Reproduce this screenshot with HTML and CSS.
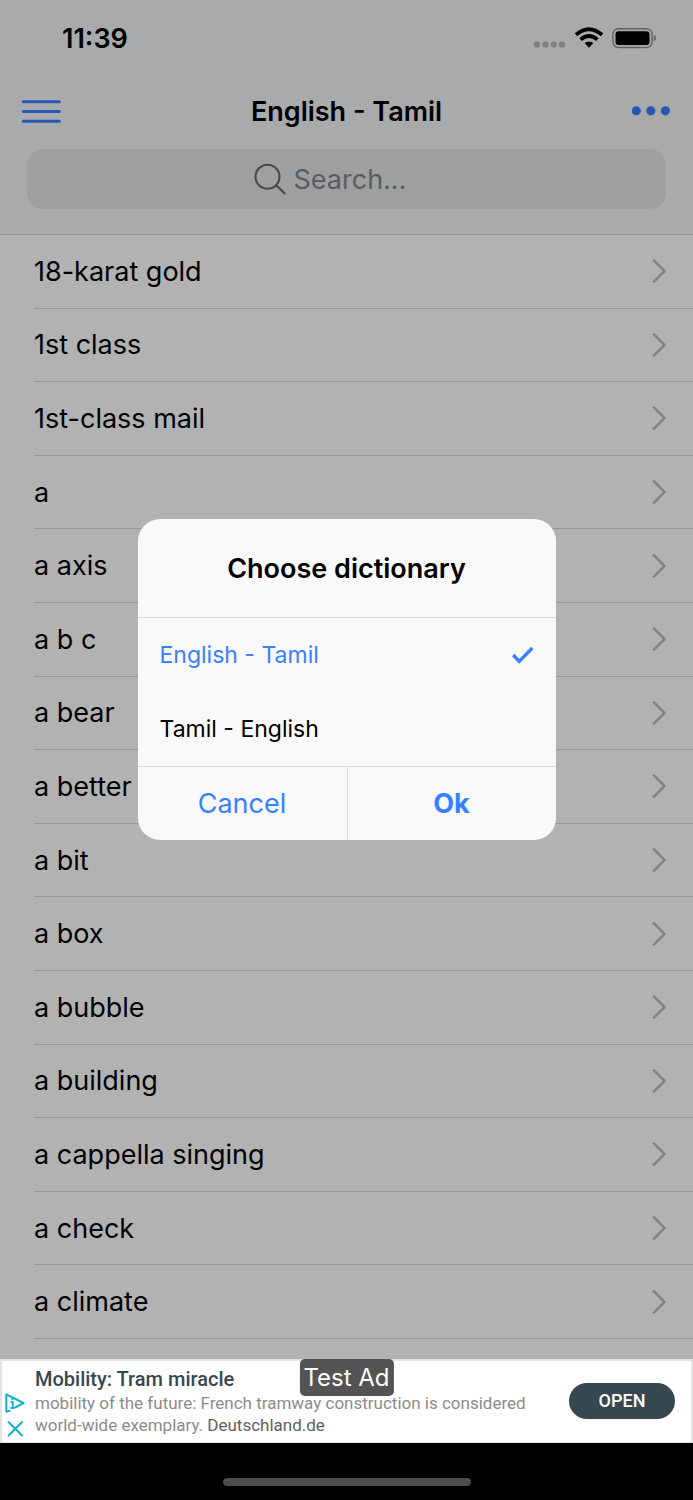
FILE: index.html
```html
<!DOCTYPE html>
<html lang="en">
<head>
<meta charset="utf-8">
<meta name="viewport" content="width=device-width, initial-scale=1">
<title>English - Tamil</title>
<link rel="stylesheet" href="styles.css">
</head>
<body>
<div class="screen">
  <header class="header">
    <div class="status">
      <time class="clock">11:39</time>
      <svg class="status-icons" viewBox="0 0 124 24" aria-hidden="true">
        <g fill="#b8b8ba">
          <rect x="1" y="15.500" width="6" height="6" rx="2"/><rect x="9.500" y="15.500" width="6" height="6" rx="2"/><rect x="17.800" y="15.500" width="6" height="6" rx="2"/><rect x="26" y="15.500" width="6" height="6" rx="2"/>
        </g>
        <g fill="none" stroke="#000" stroke-width="3.800">
          <path d="M43 8.700Q56 -2.300 69 8.700"/>
          <path d="M47.600 13.600Q56 6.500 64.400 13.600"/>
        </g>
        <path d="M51.600 17.100Q56 13.700 60.400 17.100L56 21.700Z"/>
        <rect x="80" y="2.700" width="39" height="18.800" rx="5.500" fill="none" stroke="#8c8c90" stroke-width="1.400"/>
        <rect x="82.500" y="5.200" width="34" height="13.800" rx="3"/>
        <path d="M120.700 8.700Q123.200 9.700 123.200 12T120.700 15.200Z" fill="#99999c"/>
      </svg>
    </div>
    <div class="navbar">
      <button class="icon-button" type="button" aria-label="Menu">
        <svg viewBox="0 0 40 24" width="40" height="24" stroke="#3880ff" stroke-width="3" stroke-linecap="round"><path d="M2.300 2.800H38.300M2.300 12.600H38.300M2.300 22.300H38.300"/></svg>
      </button>
      <h1 class="title">English - Tamil</h1>
      <button class="icon-button" type="button" aria-label="More">
        <svg viewBox="0 0 40 24" width="40" height="24" fill="#3880ff"><circle cx="4.300" cy="11.800" r="4.600"/><circle cx="18.800" cy="11.800" r="4.600"/><circle cx="33.400" cy="11.800" r="4.600"/></svg>
      </button>
    </div>
    <label class="search">
      <svg viewBox="0 0 32 32" width="32" height="32" fill="none" stroke="#666769" stroke-width="2.100" stroke-linecap="round"><circle cx="13.500" cy="13.800" r="12"/><path d="M22.200 22.300 30.500 30.300"/></svg>
      <input class="search-input" type="text" placeholder="Search..." aria-label="Search">
    </label>
  </header>
  <ul class="words">
    <li><a class="word" href="#">18-karat gold</a></li>
    <li><a class="word" href="#">1st class</a></li>
    <li><a class="word" href="#">1st-class mail</a></li>
    <li><a class="word" href="#">a</a></li>
    <li><a class="word" href="#">a axis</a></li>
    <li><a class="word" href="#">a b c</a></li>
    <li><a class="word" href="#">a bear</a></li>
    <li><a class="word" href="#">a better</a></li>
    <li><a class="word" href="#">a bit</a></li>
    <li><a class="word" href="#">a box</a></li>
    <li><a class="word" href="#">a bubble</a></li>
    <li><a class="word" href="#">a building</a></li>
    <li><a class="word" href="#">a cappella singing</a></li>
    <li><a class="word" href="#">a check</a></li>
    <li><a class="word" href="#">a climate</a></li>
  </ul>
  <div class="backdrop">
    <form class="dialog" role="dialog" aria-labelledby="dialog-title">
      <h2 class="dialog-title" id="dialog-title">Choose dictionary</h2>
      <div class="options">
        <label class="option"><input class="option-radio" type="radio" name="dictionary" checked><span>English - Tamil</span>
          <svg class="tick" viewBox="0 0 22 18" width="22" height="18" fill="none" stroke="#3880ff" stroke-width="3.300"><path d="M1.200 9 7.200 15.400 20.300 2"/></svg>
        </label>
        <label class="option"><input class="option-radio" type="radio" name="dictionary"><span>Tamil - English</span>
          <svg class="tick" viewBox="0 0 22 18" width="22" height="18" fill="none" stroke="#3880ff" stroke-width="3.300"><path d="M1.200 9 7.200 15.400 20.300 2"/></svg>
        </label>
      </div>
      <div class="actions">
        <button class="action" type="button">Cancel</button>
        <button class="action action-ok" type="button">Ok</button>
      </div>
    </form>
  </div>
</div>
<aside class="ad">
  <div class="ad-marks">
    <svg viewBox="0 0 20 20" width="20" height="20" fill="none" stroke="#12afcf" stroke-width="2" stroke-linejoin="round"><path d="M5.500 17.600 1.300 18.800V1.300L18.500 10 9.500 14.800"/><path d="M5.700 9H7.800V15M5.500 15H9.500" stroke-width="1.800"/><circle cx="7.300" cy="5.800" r="1.300" fill="#12afcf" stroke="none"/></svg>
    <svg viewBox="0 0 20 20" width="20" height="20" stroke="#12afcf" stroke-width="2"><path d="M3 2.500 17.500 17M17.500 2.500 3 17"/></svg>
  </div>
  <div class="ad-copy">
    <h3 class="ad-title">Mobility: Tram miracle</h3>
    <p class="ad-text">mobility of the future: French tramway construction is considered world-wide exemplary. <span class="ad-source">Deutschland.de</span></p>
  </div>
  <button class="ad-open" type="button">OPEN</button>
  <span class="ad-badge">Test Ad</span>
</aside>
<footer class="home"><div class="home-bar"></div></footer>
</body>
</html>
```
FILE: styles.css
```css
* { box-sizing: border-box; }

body {
  margin: 0;
  min-height: 100vh;
  display: flex;
  flex-direction: column;
  background: #000;
  color: #000;
  font-family: Inter, "Liberation Sans", sans-serif;
}

h1, h2, h3, p, ul { margin: 0; padding: 0; }

button { border: 0; background: none; font-family: inherit; cursor: pointer; }

.screen {
  position: relative;
  flex: 1;
  display: flex;
  flex-direction: column;
  background: #fff;
}

.header {
  padding: 0 27px 25px;
  border-bottom: 1px solid #d8d8da;
  background: #f3f4f6;
}

.status {
  display: flex;
  align-items: center;
  justify-content: space-between;
  height: 76px;
  padding: 0 9px 0 35px;
}

.clock { font-size: 27px; font-weight: 600; }

.status-icons { width: 124px; height: 24px; }

.navbar {
  display: flex;
  align-items: center;
  justify-content: space-between;
  height: 70px;
  margin: 0 -6px;
}

.icon-button { display: flex; padding: 0; }

.title { font-size: 27px; font-weight: 600; }

.search {
  display: flex;
  align-items: center;
  justify-content: center;
  gap: 8px;
  height: 60px;
  margin-top: 3px;
  border-radius: 16px;
  background: #e3e4e6;
}

.search-input {
  width: 146px;
  padding: 0;
  border: 0;
  outline: 0;
  background: none;
  font: 27px Inter, sans-serif;
}

.search-input::placeholder { color: #838487; }

.words {
  flex: 1;
  display: grid;
  grid-template-rows: repeat(15, 1fr);
  padding: 0 0 20px 34px;
  list-style: none;
}

.words li { display: grid; border-bottom: 1px solid #dcdcdc; }

.word {
  display: flex;
  align-items: center;
  justify-content: space-between;
  padding-right: 30px;
  color: inherit;
  font-size: 27px;
  text-decoration: none;
}

.word::after {
  content: "";
  width: 15px;
  height: 15px;
  border: solid #bebebe;
  border-width: 3px 3px 0 0;
  border-radius: 2px;
  transform: rotate(45deg);
}

.backdrop {
  position: absolute;
  inset: 0;
  display: flex;
  align-items: center;
  justify-content: center;
  background: rgba(0, 0, 0, 0.3);
}

.dialog {
  width: 418px;
  max-width: 90%;
  overflow: hidden;
  border-radius: 22px;
  background: #f9f9f9;
}

.dialog-title {
  padding: 33px 22px 32px;
  font-size: 27px;
  font-weight: 600;
  line-height: 33px;
  text-align: center;
}

.options { border: solid #dadada; border-width: 1px 0; }

.option {
  display: flex;
  align-items: center;
  justify-content: space-between;
  height: 74px;
  padding: 0 22px;
  font-size: 23px;
}

.option-radio { position: absolute; opacity: 0; pointer-events: none; }

.tick { display: none; }

.option:has(:checked) { color: #3880ff; }

.option:has(:checked) .tick { display: block; }

.actions { display: grid; grid-template-columns: 1fr 1fr; }

.action { height: 73px; padding: 0; color: #3880ff; font-size: 27px; }

.action-ok { border-left: 1px solid #dadada; font-weight: 700; }

.ad {
  position: relative;
  display: flex;
  align-items: center;
  height: 84px;
  padding: 0 16px 2px 3px;
  border: solid #e4e4e4;
  border-width: 2px 2px 1px;
  background: #fff;
  font-family: Roboto, sans-serif;
}

.ad-marks { display: flex; flex-direction: column; gap: 6px; margin: 30px 10px 0 0; }

.ad-copy { flex: 1; }

.ad-title { color: #37474f; font-size: 20px; font-weight: 500; line-height: 26px; }

.ad-text { max-width: 500px; color: #8c8c8c; font-size: 17px; line-height: 22px; }

.ad-source { color: #616161; }

.ad-open {
  width: 106px;
  height: 36px;
  border-radius: 18px;
  background: #37474f;
  color: #fff;
  font-size: 18px;
  font-weight: 500;
}

.ad-badge {
  position: absolute;
  top: -2px;
  left: 50%;
  padding: 0 4px;
  border-radius: 5px;
  background: #545454;
  color: #fff;
  font: 24px/37px Inter, sans-serif;
  transform: translateX(-50%);
  white-space: nowrap;
}

.home { display: flex; align-items: flex-end; justify-content: center; height: 57px; padding-bottom: 14px; }

.home-bar { width: 248px; height: 8px; border-radius: 4px; background: #4d4d4d; }
```
